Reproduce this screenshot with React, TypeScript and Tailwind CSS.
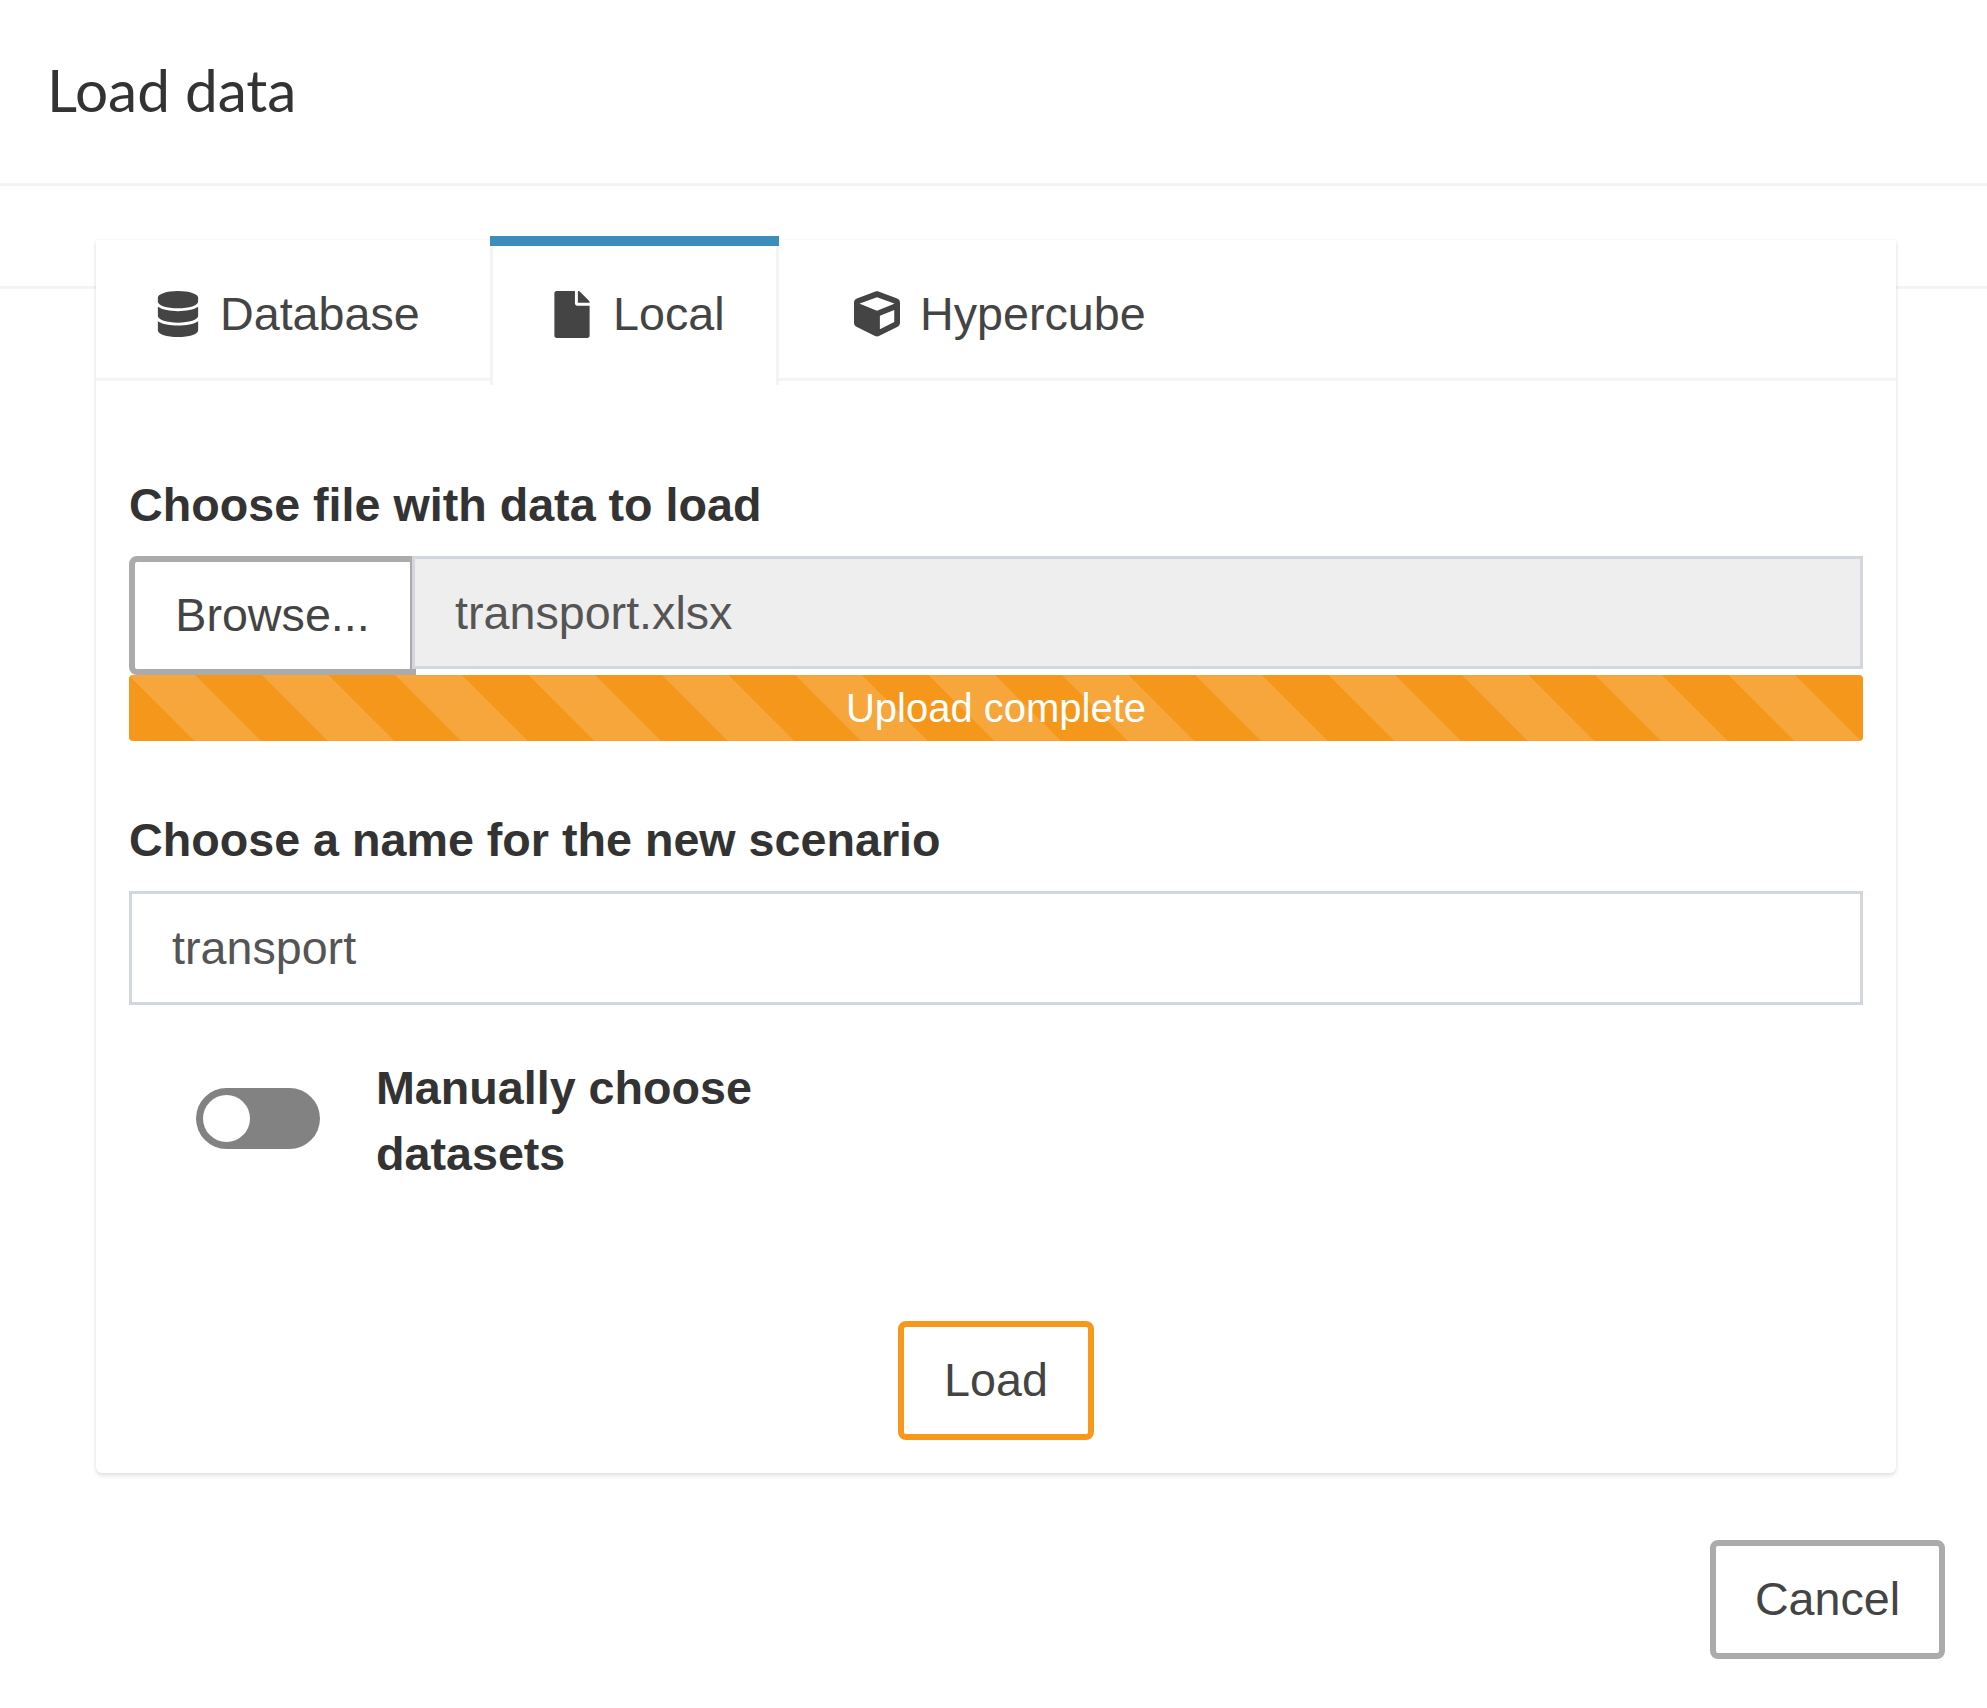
import { FaCube, FaDatabase, FaFile } from 'react-icons/fa'

const sans = "font-['Liberation_Sans',Arial,sans-serif]"

export default function App() {
  return (
    <div className={`${sans} min-h-screen bg-white text-[46.67px] text-[#444]`}>
      {/* Modal title */}
      <div className="flex h-[186px] items-center border-b-[3px] border-[#f4f4f4] pl-[47px] pb-[4px]">
        <h4 className="font-['Lato',sans-serif] text-[58.5px] leading-none font-normal text-[#333]">Load data</h4>
      </div>

      <div className="relative flex flex-col">
        {/* Line of the outer tab strip, behind the card */}
        <div className="absolute top-[100px] right-0 left-0 h-[3px] bg-[#f4f4f4]" />

        <div className="relative mt-[54px] mr-[91px] ml-[96px] rounded-b-[6px] bg-white shadow-[0_0_3px_rgba(0,0,0,0.06),0_3px_4px_rgba(0,0,0,0.1)]">
          <div className="flex h-[141px] border-b-[3px] border-[#f4f4f4]">
            <div className="flex w-[394px] items-center gap-[21px] pt-[10px] pl-[61px]">
              <FaDatabase className="h-[46px] w-[42px] shrink-0" />
              <span>Database</span>
            </div>
            <div className="-mt-[4px] flex h-[149px] w-[289px] flex-col bg-white">
              <div className="h-[10px] shrink-0 bg-[#3c8dbc]" />
              <div className="flex flex-1 items-center gap-[23px] border-x-[3px] border-[#f4f4f4] pb-[3px] pl-[61px]">
                <FaFile className="h-[47px] w-[36px] shrink-0" />
                <span>Local</span>
              </div>
            </div>
            <div className="flex items-center gap-[18px] pt-[10px] pl-[73px]">
              <FaCube className="h-[46px] w-[50px] shrink-0" />
              <span>Hypercube</span>
            </div>
          </div>

          <div className="px-[33px] pt-[91px] pb-[33px]">
            <label className="mb-[18px] block leading-[66px] font-bold text-[#333]">Choose file with data to load</label>
            <div className="flex h-[119px] items-start">
              <button className="h-[119px] w-[287px] shrink-0 rounded-l-[8px] border-[6px] border-[#ababab] bg-white pb-[2px] text-[46.67px] text-[#444]">
                Browse...
              </button>
              <div className="relative -ml-[4px] flex h-[113px] flex-1 items-center border-[3px] border-[#d2d6de] bg-[#eee] pl-[40px] text-[#555]">
                transport.xlsx
              </div>
            </div>
            <div className="flex h-[66px] items-center justify-center rounded-[4px] bg-[#f4971b] bg-[linear-gradient(45deg,rgba(255,255,255,0.14)_25%,transparent_25%,transparent_50%,rgba(255,255,255,0.14)_50%,rgba(255,255,255,0.14)_75%,transparent_75%,transparent)] bg-[length:133.33px_133.33px] text-[40px] text-white">
              Upload complete
            </div>

            <label className="mt-[66px] mb-[18px] block leading-[66px] font-bold text-[#333]">Choose a name for the new scenario</label>
            <div className="flex h-[114px] items-center border-[3px] border-[#d2d6de] bg-white pl-[40px] text-[#555]">transport</div>

            <div className="mt-[50px] flex items-start pl-[67px]">
              <div className="mt-[33px] flex h-[61px] w-[124px] shrink-0 items-center rounded-full bg-[#828282] pl-[7px]">
                <div className="h-[47px] w-[47px] rounded-full bg-white" />
              </div>
              <div className="ml-[56px] w-[420px] leading-[66px] font-bold text-[#333]">Manually choose datasets</div>
            </div>

            <div className="mt-[134px] flex justify-center">
              <button className="h-[119px] w-[196px] rounded-[8px] border-[6px] border-[#f7981d] bg-white pb-[2px] text-[46.67px] text-[#444]">Load</button>
            </div>
          </div>
        </div>

        <div className="mt-[67px] flex justify-end pr-[42px]">
          <button className="h-[119px] w-[235px] rounded-[8px] border-[6px] border-[#ababab] bg-white pb-[2px] text-[46.67px] text-[#444]">Cancel</button>
        </div>
      </div>
    </div>
  )
}
